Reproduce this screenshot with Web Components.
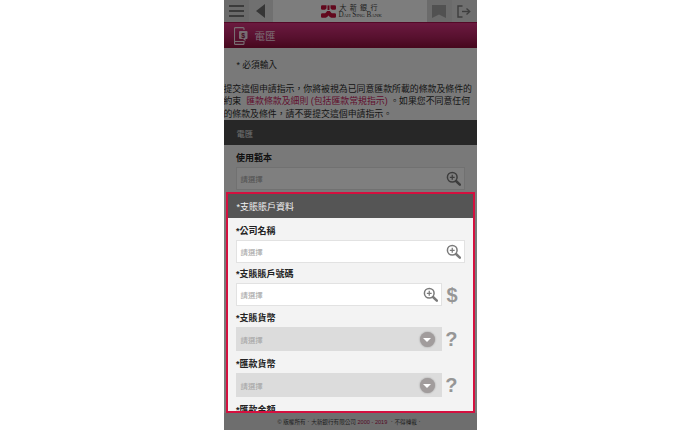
<!DOCTYPE html>
<html lang="zh-Hant">
<head>
<meta charset="utf-8">
<title>電匯</title>
<style>
  html, body { margin: 0; height: 100%; background: #fff; }
  body {
    display: flex;
    justify-content: center;
    overflow: hidden;
    font-family: "Liberation Sans", "Noto Sans CJK TC", sans-serif;
  }
</style>
</head>
<body>
<template id="zoom-icon">
  <svg width="15" height="15" viewBox="0 0 18 18" fill="none" stroke="#7a7a7a">
    <circle cx="7.5" cy="7.5" r="5.8" stroke-width="1.800"/>
    <path d="M7.5 4.6v5.800M4.600 7.500h5.800" stroke-width="1.500"/>
    <path d="M12 12l4.600 4.400" stroke-width="3" stroke-linecap="round"/>
  </svg>
</template>

<bank-app>
  <bank-header></bank-header>
  <bank-title>電匯</bank-title>
  <bank-note></bank-note>
  <bank-bar>電匯</bank-bar>
  <bank-field label="使用範本" type="search" style="--field-pad: 12px; margin-top: 7px"></bank-field>
  <bank-footer></bank-footer>
  <bank-scrim></bank-scrim>
  <bank-spotlight slot="over">
    <bank-bar tone="section" slot="head">*支賬賬戶資料</bank-bar>
    <bank-field label="*公司名稱" type="search"></bank-field>
    <bank-field label="*支賬賬戶號碼" type="search" side="$"></bank-field>
    <bank-field label="*支賬貨幣" type="select" side="?"></bank-field>
    <bank-field label="*匯款貨幣" type="select" side="?"></bank-field>
    <bank-field label="*匯款金額" type="text"></bank-field>
  </bank-spotlight>
</bank-app>

<script>
class BaseElement extends HTMLElement {
  constructor() {
    super();
    this.attachShadow({ mode: "open" });
  }
}

class BankApp extends BaseElement {
  connectedCallback() {
    this.shadowRoot.innerHTML = `
      <style>
        :host {
          display: flex;
          flex-direction: column;
          position: relative;
          width: 253px;
          height: 430px;
          overflow: hidden;
          background: #f3f3f3;
          color: #222;
        }
      </style>
      <slot></slot>
      <slot name="over"></slot>
    `;
  }
}

class BankHeader extends BaseElement {
  connectedCallback() {
    this.shadowRoot.innerHTML = `
      <style>
        :host {
          display: grid;
          grid-template-columns: 25px 24px 1fr 25px 25px;
          height: 22px;
          flex: none;
          background: #fbfbfb;
        }
        .btn {
          display: flex;
          align-items: center;
          justify-content: center;
          background: #d6d6d6;
        }
        .logo {
          display: flex;
          align-items: center;
          justify-content: center;
          gap: 3px;
        }
        .words {
          display: flex;
          flex-direction: column;
          width: 40px;
          font-family: "Liberation Serif", "Noto Sans CJK TC", serif;
          color: #444;
        }
        .zh { font-size: 7px; line-height: 8px; letter-spacing: 3.300px; padding-left: 1px; white-space: nowrap; }
        .en { font-size: 7.200px; line-height: 6px; font-variant: small-caps; letter-spacing: -.1px; white-space: nowrap; }
      </style>
      <div class="btn">
        <svg width="15" height="12" viewBox="0 0 15 12" fill="#777"><rect y="0" width="15" height="2"/><rect y="5" width="15" height="2"/><rect y="10" width="15" height="2"/></svg>
      </div>
      <div class="btn" style="background:#e0e0e0">
        <svg width="9" height="14" viewBox="0 0 9 14" fill="#6c6c6c"><path d="M9 0v14L0 7z"/></svg>
      </div>
      <div class="logo">
        <svg width="15" height="13" viewBox="0 0 18 14" preserveAspectRatio="none" fill="#c4103a">
          <path d="M0 1.600Q0 .4 1.400.4h5.200v3.100c-.5 1-1.400 1.600-2.600 1.600H1.500Q0 5.100 0 3.700z"/>
          <path d="M18 1.600Q18 .4 16.600.4h-5.200v3.100c.5 1 1.400 1.600 2.600 1.600h2.500q1.500 0 1.500-1.400z"/>
          <path d="M7.800.4h2.400v5H7.800z"/>
          <path d="M0 10.300Q0 8.900 1.500 8.900h2.700c1 0 2-.9 3.100-2.500h3.400c1.100 1.600 2.100 2.500 3.100 2.500h2.700q1.500 0 1.500 1.400v2q0 1.300-1.400 1.300h-4.100Q10.500 13.600 9 11.300 7.500 13.600 5.500 13.600H1.400Q0 13.600 0 12.300z"/>
        </svg>
        <div class="words"><span class="zh">大新銀行</span><span class="en">Dah Sing Bank</span></div>
      </div>
      <div class="btn">
        <svg width="14" height="13" viewBox="0 0 14 13" fill="#a2a2a2"><path d="M0 0h14v13L7 9.500 0 13z"/></svg>
      </div>
      <div class="btn" style="background:#dedede">
        <svg width="14" height="13" viewBox="0 0 14 13" fill="none" stroke="#7c7c7c" stroke-width="1.400">
          <path d="M5.500 1H1v11h4.500"/>
          <path d="M5 6.500h7"/>
          <path d="M9.500 3.500l3.200 3-3.200 3" />
        </svg>
      </div>
    `;
  }
}

class BankTitle extends BaseElement {
  connectedCallback() {
    this.shadowRoot.innerHTML = `
      <style>
        :host {
          display: flex;
          align-items: center;
          gap: 7px;
          flex: none;
          height: 26px;
          padding-left: 10px;
          box-sizing: border-box;
          border-top: 1px solid #a8124f;
          background: linear-gradient(#d6347f, #b22360 55%, #8c0f3a);
          color: #f4d3e1;
          font-size: 10.500px;
        }
        svg { display: block; }
      </style>
      <svg width="14" height="18" viewBox="0 0 14 18" fill="none" stroke="#f1dbe5" stroke-width="1.100">
        <path d="M10 14v2.400q0 1-1 1H1.500q-1 0-1-1V1.600q0-1 1-1H9q1 0 1 1V3"/>
        <path d="M.5 14.500H10"/>
        <path d="M6 4h6.500q1 0 1 1v6q0 1-1 1h-1v2.300L9 12H6q-1 0-1-1V5q0-1 1-1z" fill="#f1dbe5" stroke="none"/>
        <text x="9.300" y="10.700" font-size="7" font-weight="700" font-family="Liberation Sans" text-anchor="middle" fill="#8c1745" stroke="none">$</text>
      </svg>
      <span><slot></slot></span>
    `;
  }
}

class BankNote extends BaseElement {
  connectedCallback() {
    this.shadowRoot.innerHTML = `
      <style>
        :host {
          display: block;
          flex: none;
          height: 72px;
          font-size: 8.900px;
          line-height: 12.500px;
          color: #2c2c2c;
          box-sizing: border-box;
          padding-top: 11px;
        }
        .req { padding: 0 0 0 13px; font-size: 8.700px; margin-bottom: 11px; }
        p { margin: 0; white-space: nowrap; }
        .link { color: #c2185b; }
      </style>
      <div class="req">* 必須輸入</div>
      <p>提交這個申請指示，你將被視為已同意匯款所載的條款及條件的<br>約束&nbsp; <span class="link">匯款條款及細則 (包括匯款常規指示)</span> 。如果您不同意任何<br>的條款及條件，請不要提交這個申請指示。</p>
    `;
  }
}

class BankBar extends BaseElement {
  connectedCallback() {
    const section = this.getAttribute("tone") === "section";
    this.shadowRoot.innerHTML = `
      <style>
        :host {
          display: flex;
          align-items: center;
          flex: none;
          height: ${section ? 24 : 25}px;
          padding-left: ${section ? 9 : 13}px;
          background: ${section ? "#555" : "#4e4e4e"};
          color: ${section ? "#f2f2f2" : "#ddd"};
          font-size: ${section ? 9 : 8.300}px;
        }
      </style>
      <slot></slot>
    `;
  }
}

class BankField extends BaseElement {
  connectedCallback() {
    const type = this.getAttribute("type");
    const side = this.getAttribute("side");
    const label = this.getAttribute("label");
    const isSelect = type === "select";
    const trailing = type === "search"
      ? document.getElementById("zoom-icon").innerHTML
      : `<span class="arrow"><i></i></span>`;
    const control = type === "text" ? "" : `
      <div class="row">
        <div class="box">
          <span class="ph">請選擇</span>
          ${trailing}
        </div>
        ${side ? `<span class="side">${side}</span>` : ""}
      </div>`;
    this.shadowRoot.innerHTML = `
      <style>
        :host {
          display: block;
          flex: none;
          padding: 0 var(--field-pad, 8px);
          margin-bottom: ${isSelect ? 7 : side ? 6 : 5}px;
        }
        .label {
          font-size: 9px;
          font-weight: 700;
          line-height: 12px;
          margin-bottom: 3px;
          padding-left: .5px;
          color: #222;
        }
        .row { display: flex; align-items: center; }
        .box {
          flex: 1;
          display: flex;
          align-items: center;
          justify-content: space-between;
          box-sizing: border-box;
          height: ${isSelect ? 24 : 23}px;
          padding: 0 ${isSelect ? 6 : 3}px 0 4px;
          background: ${isSelect ? "#dcdcdc" : "#fff"};
          border: 1px solid ${isSelect ? "#dcdcdc" : "#e2e2e2"};
        }
        .ph { font-size: 7.400px; color: #a4a4a4; }
        .side {
          flex: none;
          width: 23px;
          text-align: right;
          padding-right: 7px;
          box-sizing: border-box;
          font-size: 20px;
          font-weight: 700;
          line-height: 20px;
          color: #969696;
        }
        svg { display: block; }
        .arrow {
          display: flex;
          align-items: center;
          justify-content: center;
          width: 15px;
          height: 15px;
          border-radius: 50%;
          background: #a19c9c;
          box-shadow: 0 0 2px rgba(0, 0, 0, .35);
        }
        .arrow i {
          width: 0;
          height: 0;
          margin-top: 2px;
          border: 4px solid transparent;
          border-top: 4px solid #fff;
          border-bottom: 0;
        }
      </style>
      <div class="label">${label}</div>
      ${control}
    `;
  }
}

class BankFooter extends BaseElement {
  connectedCallback() {
    this.shadowRoot.innerHTML = `
      <style>
        :host {
          display: flex;
          align-items: center;
          justify-content: center;
          flex: none;
          height: 17px;
          margin-top: auto;
          font-size: 5.600px;
          color: #444;
          background: #dcdcdc;
          white-space: nowrap;
        }
        b { font-weight: 400; color: #a8144c; }
      </style>
      © 版權所有．大新銀行有限公司&nbsp;<b>2000 - 2019</b>&nbsp;．不得轉載．
    `;
  }
}

class BankScrim extends BaseElement {
  connectedCallback() {
    this.shadowRoot.innerHTML = `
      <style>
        :host {
          display: block;
          position: absolute;
          inset: 0;
          background: rgba(0, 0, 0, .5);
        }
      </style>
    `;
  }
}

class BankSpotlight extends BaseElement {
  connectedCallback() {
    this.shadowRoot.innerHTML = `
      <style>
        :host {
          display: block;
          position: absolute;
          left: 2px;
          top: 192px;
          width: 249px;
          height: 221px;
          box-sizing: border-box;
          border: 2px solid #d4103f;
          background: #f3f3f3;
          overflow: hidden;
        }
        .body { display: flex; flex-direction: column; padding-top: 7px; }
      </style>
      <slot name="head"></slot>
      <div class="body"><slot></slot></div>
    `;
  }
}

customElements.define("bank-app", BankApp);
customElements.define("bank-header", BankHeader);
customElements.define("bank-title", BankTitle);
customElements.define("bank-note", BankNote);
customElements.define("bank-bar", BankBar);
customElements.define("bank-field", BankField);
customElements.define("bank-footer", BankFooter);
customElements.define("bank-scrim", BankScrim);
customElements.define("bank-spotlight", BankSpotlight);
</script>
</body>
</html>
